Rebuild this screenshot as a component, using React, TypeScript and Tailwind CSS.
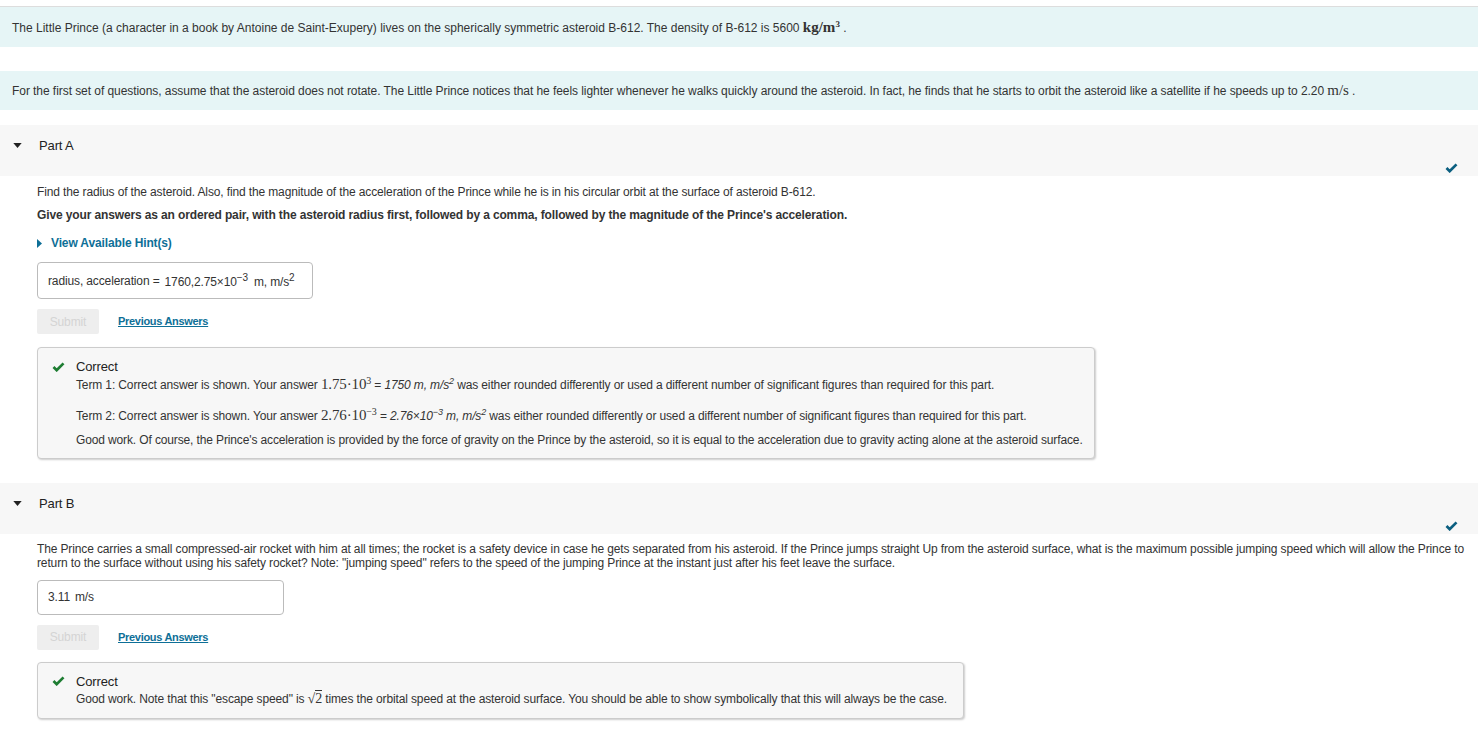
import React from "react"

function Check({ className }: { className: string }) {
  return (
    <svg className={className} viewBox="0 0 14 11" aria-hidden="true">
      <path d="M1.5 5.5 L5 9 L12.5 1.5" fill="none" stroke="currentColor" strokeWidth={3} strokeLinecap="butt" strokeLinejoin="miter" />
    </svg>
  )
}

function Caret({ className }: { className: string }) {
  return (
    <svg className={className} viewBox="0 0 10 6" aria-hidden="true">
      <path d="M0 0 H10 L5 6 Z" fill="currentColor" />
    </svg>
  )
}

function PartHeader({ label }: { label: string }) {
  return (
    <div className="bg-[#f7f7f7] h-[51px] relative flex items-start pt-[11px]">
      <Caret className="w-[9px] h-[5px] ml-[13px] mt-[7px] text-[#222]" />
      <span className="ml-[17px] text-[13px] text-[#222]">{label}</span>
      <Check className="absolute right-[20px] bottom-[3px] w-[13px] h-[10px] text-[#0b5f80]" />
    </div>
  )
}

function SubmitRow() {
  return (
    <div className="flex items-center gap-[19px]">
      <div className="bg-[#eeeeee] text-[#d4d4d4] text-[12px] w-[62px] h-[25px] flex items-center justify-center rounded-[2px]">
        Submit
      </div>
      <a className="text-[11px] font-bold text-[#0e6f97] underline tracking-[-0.3px]">Previous Answers</a>
    </div>
  )
}

const serif = "font-['Liberation_Serif','DejaVu_Serif',serif]"

export default function App() {
  return (
    <div className="font-['Liberation_Sans',Arial,sans-serif] text-[12px] tracking-[-0.13px] text-[#333] bg-white min-h-[729px] pr-[6px] pt-[6px]">
      {/* intro */}
      <div className="border-t border-[#dddddd] bg-[#e6f5f6] h-[41px] flex items-center pl-[12px] tracking-normal">
        <span>
          The Little Prince (a character in a book by Antoine de Saint-Exupery) lives on the spherically symmetric asteroid B-612. The density of B-612 is 5600{" "}
          <span className={`${serif} text-[15px] font-bold`}>kg/m<sup className="text-[9px]">3</sup></span> .
        </span>
      </div>

      <div className="h-[24px]" />

      <div className="bg-[#e6f5f6] h-[39px] flex items-center pl-[12px] tracking-[-0.06px]">
        <span>
          For the first set of questions, assume that the asteroid does not rotate. The Little Prince notices that he feels lighter whenever he walks quickly around the asteroid. In fact, he finds that he starts to orbit the asteroid like a satellite if he speeds up to 2.20{" "}
          <span className={`${serif} text-[15px]`}>m/s</span> .
        </span>
      </div>

      <div className="h-[15px]" />

      {/* Part A */}
      <PartHeader label="Part A" />
      <div className="pl-[37px] pt-[9px]">
        <p className="leading-[14px]">
          Find the radius of the asteroid. Also, find the magnitude of the acceleration of the Prince while he is in his circular orbit at the surface of asteroid B-612.
        </p>
        <p className="leading-[14px] mt-[9px] font-bold">
          Give your answers as an ordered pair, with the asteroid radius first, followed by a comma, followed by the magnitude of the Prince's acceleration.
        </p>
        <div className="flex items-center mt-[14px] h-[14px]">
          <svg className="w-[5px] h-[9px] text-[#0e6f97]" viewBox="0 0 5 9" aria-hidden="true">
            <path d="M0 0 L5 4.5 L0 9 Z" fill="currentColor" />
          </svg>
          <span className="ml-[9px] font-bold text-[#0e6f97]">View Available Hint(s)</span>
        </div>

        <div className="mt-[12px] w-[276px] h-[37px] border border-[#bbbbbb] rounded-[4px] flex items-center pl-[10px]">
          <span>radius, acceleration =</span>
          <span className="ml-[5px] text-[12px] mt-[2px]">
            1760,2.75×10<sup className="text-[10px]">−3</sup>
            <span className="ml-[6px]">m, m/s<sup className="text-[10px]">2</sup></span>
          </span>
        </div>

        <div className="mt-[10px]">
          <SubmitRow />
        </div>

        <div className="mt-[13px] w-[1058px] bg-[#f7f7f7] border border-[#cccccc] rounded-[4px] shadow-[1px_1px_2px_rgba(0,0,0,0.2)] pl-[14px] pr-[10px] pt-[9px] pb-[10px]">
          <div className="flex items-center">
            <Check className="w-[13px] h-[10px] text-[#1e7d32]" />
            <span className="ml-[11px] text-[13px] text-[#222]">Correct</span>
          </div>
          <div className="pl-[24px]">
            <p className="leading-[16px] -mt-[1px]">
              Term 1: Correct answer is shown. Your answer{" "}
              <span className={`${serif} text-[15px]`}>1.75·10<sup className="text-[10px]">3</sup></span> ={" "}
              <i>1750 m, m/s<sup>2</sup></i> was either rounded differently or used a different number of significant figures than required for this part.
            </p>
            <p className="leading-[16px] mt-[14px]">
              Term 2: Correct answer is shown. Your answer{" "}
              <span className={`${serif} text-[15px]`}>2.76·10<sup className="text-[10px]">−3</sup></span> ={" "}
              <i>2.76×10<sup>−3</sup> m, m/s<sup>2</sup></i> was either rounded differently or used a different number of significant figures than required for this part.
            </p>
            <p className="leading-[16px] mt-[8px]">
              Good work. Of course, the Prince's acceleration is provided by the force of gravity on the Prince by the asteroid, so it is equal to the acceleration due to gravity acting alone at the asteroid surface.
            </p>
          </div>
        </div>
      </div>

      <div className="h-[24px]" />

      {/* Part B */}
      <PartHeader label="Part B" />
      <div className="pl-[37px] pt-[8px]">
        <p className="leading-[14px] pr-[10px]">
          The Prince carries a small compressed-air rocket with him at all times; the rocket is a safety device in case he gets separated from his asteroid. If the Prince jumps straight Up from the asteroid surface, what is the maximum possible jumping speed which will allow the Prince to return to the surface without using his safety rocket? Note: "jumping speed" refers to the speed of the jumping Prince at the instant just after his feet leave the surface.
        </p>
        <div className="mt-[10px] w-[247px] h-[35px] border border-[#bbbbbb] rounded-[4px] flex items-center pl-[10px]">
          <span>3.11</span>
          <span className="ml-[5px]">m/s</span>
        </div>
        <div className="mt-[10px]">
          <SubmitRow />
        </div>
        <div className="mt-[12px] w-[927px] bg-[#f7f7f7] border border-[#cccccc] rounded-[4px] shadow-[1px_1px_2px_rgba(0,0,0,0.2)] pl-[14px] pt-[9px] pb-[11px]">
          <div className="flex items-center">
            <Check className="w-[13px] h-[10px] text-[#1e7d32]" />
            <span className="ml-[11px] text-[13px] text-[#222]">Correct</span>
          </div>
          <p className="pl-[24px] leading-[16px] mt-0">
            Good work. Note that this "escape speed" is{" "}
            <span className={`${serif} text-[14px]`}>√<span className="border-t border-[#333]">2</span></span>{" "}
            times the orbital speed at the asteroid surface. You should be able to show symbolically that this will always be the case.
          </p>
        </div>
      </div>
    </div>
  )
}
